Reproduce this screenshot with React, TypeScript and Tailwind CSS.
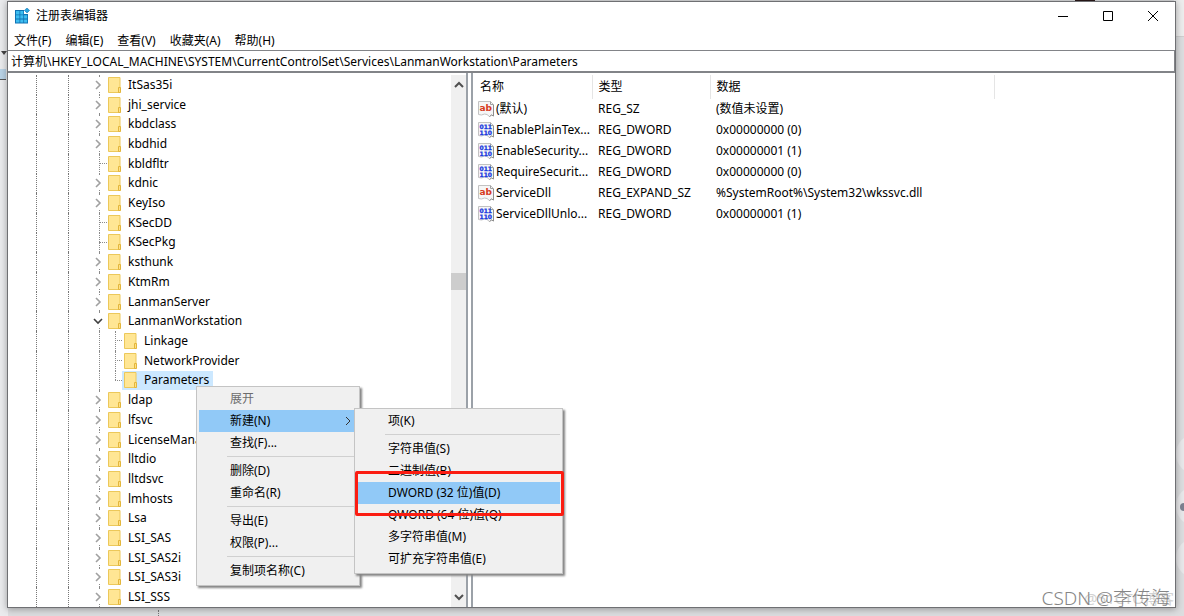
import { ReactNode } from "react";

interface TreeNode {
  name: string;
  state?: "closed" | "open";
  child?: boolean;
  last?: boolean;
  selected?: boolean;
}

interface RegValue {
  name: string;
  type: string;
  data: string;
  text?: boolean;
}

const nodes: TreeNode[] = [
  { name: "ItSas35i", state: "closed" },
  { name: "jhi_service", state: "closed" },
  { name: "kbdclass", state: "closed" },
  { name: "kbdhid", state: "closed" },
  { name: "kbldfltr" },
  { name: "kdnic", state: "closed" },
  { name: "KeyIso", state: "closed" },
  { name: "KSecDD" },
  { name: "KSecPkg" },
  { name: "ksthunk", state: "closed" },
  { name: "KtmRm", state: "closed" },
  { name: "LanmanServer", state: "closed" },
  { name: "LanmanWorkstation", state: "open" },
  { name: "Linkage", child: true },
  { name: "NetworkProvider", child: true },
  { name: "Parameters", child: true, last: true, selected: true },
  { name: "ldap", state: "closed" },
  { name: "lfsvc", state: "closed" },
  { name: "LicenseManager", state: "closed" },
  { name: "lltdio", state: "closed" },
  { name: "lltdsvc", state: "closed" },
  { name: "lmhosts", state: "closed" },
  { name: "Lsa", state: "closed" },
  { name: "LSI_SAS", state: "closed" },
  { name: "LSI_SAS2i", state: "closed" },
  { name: "LSI_SAS3i", state: "closed" },
  { name: "LSI_SSS", state: "closed" },
];

const values: RegValue[] = [
  { name: "(默认)", type: "REG_SZ", data: "(数值未设置)", text: true },
  { name: "EnablePlainTex...", type: "REG_DWORD", data: "0x00000000 (0)" },
  { name: "EnableSecurity...", type: "REG_DWORD", data: "0x00000001 (1)" },
  { name: "RequireSecurit...", type: "REG_DWORD", data: "0x00000000 (0)" },
  {
    name: "ServiceDll",
    type: "REG_EXPAND_SZ",
    data: "%SystemRoot%\\System32\\wkssvc.dll",
    text: true,
  },
  { name: "ServiceDllUnlo...", type: "REG_DWORD", data: "0x00000001 (1)" },
];

const menus = ["文件(F)", "编辑(E)", "查看(V)", "收藏夹(A)", "帮助(H)"];

const RegeditIcon = () => (
  <svg className="size-4 shrink-0" viewBox="0 0 16 16">
    <path d="M1 2h9v4h4v9.500H1z" fill="#1073b4" />
    <g fill="#3dbdf0">
      <path d="M2 3h3.500v3.400H2zM6.300 3h3v3.400h-3z" />
      <path d="M2 7.200h3.500v3.400H2zM6.300 7.200h3v3.400h-3zM10.100 7.200h3v3.400h-3z" />
      <path d="M2 11.400h3.500v3.200H2zM6.300 11.400h3v3.200h-3zM10.100 11.400h3v3.200h-3z" />
    </g>
    <path d="M13 0l2.600 2.400L13 5l-2.600-2.600z" fill="#2aa5df" stroke="#1479b8" strokeWidth=".6" />
  </svg>
);

const FolderIcon = () => (
  <svg className="h-4 w-3.5 shrink-0" viewBox="0 0 14 16">
    <path d="M.5.5h11.500v15H.5z" fill="#ffe694" stroke="#ecc85a" />
    <path d="M10.500 10.500h2v5h-2z" fill="#ffe086" stroke="#e3b63c" />
  </svg>
);

const ValueIcon = ({ text }: { text?: boolean }) => (
  <svg
    className="h-4 w-4 shrink-0 font-['DejaVu_Sans',sans-serif] font-bold"
    viewBox="0 0 16 16"
  >
    <path
      d="M.5.5h12l3 3v11.500l-2-1-2 1.500-2.500-2-2.500-.5-3 1-3-.5z"
      fill="#f6f6f6"
      stroke="#c2c2c2"
    />
    <path d="M12.500.5v3h3" fill="none" stroke="#a0a0a0" />
    <path d="M15.500 4v11l-2-1-2 1.500" fill="none" stroke="#8f8f8f" />
    {text ? (
      <text x="1.500" y="10" fontSize="9" fill="#d63a1e">
        ab
      </text>
    ) : (
      <g fontSize="6" fill="#1a3be0" stroke="#1a3be0" strokeWidth=".3">
        <text x="1.500" y="7">
          011
        </text>
        <text x="1.500" y="13">
          110
        </text>
      </g>
    )}
  </svg>
);

const Chevron = ({ className, d }: { className: string; d: string }) => (
  <svg className={className} viewBox="0 0 10 10" fill="none" stroke="currentColor">
    <path d={d} />
  </svg>
);

const TreeRow = ({ node }: { node: TreeNode }) => (
  <li className="flex min-h-0 flex-1 items-stretch">
    <span className="ml-7 w-8 shrink-0 border-l border-dotted border-[#777]" />
    <span className="w-[31px] shrink-0 border-l border-dotted border-[#777]" />
    <span className="relative flex w-4 shrink-0 items-center">
      <span className="absolute inset-y-0 left-0 border-l border-dotted border-[#8a8a8a]" />
      {!node.state && !node.child && (
        <span className="w-2 border-t border-dotted border-[#8a8a8a]" />
      )}
      {node.state && (
        <button
          aria-label={node.name}
          className="absolute -left-1.5 flex h-3.5 w-3 items-center bg-white"
        >
          {node.state === "open" ? (
            <Chevron className="size-2.5 stroke-[1.6] text-[#404040]" d="M1 3l4 4 4-4" />
          ) : (
            <Chevron className="size-2.5 stroke-[1.6] text-[#a0a0a0]" d="M3 1l4 4-4 4" />
          )}
        </button>
      )}
    </span>
    {node.child && (
      <span className="relative flex w-[7px] shrink-0 items-center">
        <span
          className={
            node.last
              ? "absolute top-0 left-0 h-1/2 border-l border-dotted border-[#8a8a8a]"
              : "absolute inset-y-0 left-0 border-l border-dotted border-[#8a8a8a]"
          }
        />
        <span className="w-full border-t border-dotted border-[#8a8a8a]" />
      </span>
    )}
    <span
      className={
        node.selected
          ? "flex items-center gap-1.5 bg-[#cce8ff] pr-1 pl-0.5"
          : node.child
            ? "flex items-center gap-1.5 pl-0.5"
            : "relative -ml-[7px] flex items-center gap-1.5"
      }
    >
      <FolderIcon />
      {node.name}
    </span>
  </li>
);

const ScrollBar = () => (
  <div className="mt-0.5 flex w-[15px] shrink-0 flex-col items-center bg-[#f0f0f0]">
    <button aria-label="向上滚动" className="flex h-5 items-center text-[#505050]">
      <Chevron className="size-2.5 stroke-2" d="M1 7l4-4 4 4" />
    </button>
    <div className="flex w-full flex-1 flex-col">
      <div className="flex-3" />
      <div className="h-[17px] bg-[#cdcdcd]" />
      <div className="flex-5" />
    </div>
    <button aria-label="向下滚动" className="flex h-5 items-center text-[#505050]">
      <Chevron className="size-2.5 stroke-2" d="M1 3l4 4 4-4" />
    </button>
  </div>
);

const Menu = ({ className, children }: { className: string; children: ReactNode }) => (
  <div
    role="menu"
    className={`absolute border border-[#c4c4c4] bg-[#f0f0f0] px-0.5 pt-px pb-[3px] shadow-[2px_2px_2px_#858585] ${className}`}
  >
    {children}
  </div>
);

interface MenuItemProps {
  label: string;
  active?: boolean;
  disabled?: boolean;
  arrow?: boolean;
}

const MenuItem = ({ label, active, disabled, arrow }: MenuItemProps) => (
  <button
    role="menuitem"
    disabled={disabled}
    className={`flex h-[22px] w-full items-center pr-1 pl-[31px] text-left whitespace-nowrap ${
      active ? "bg-[#91c9f7]" : ""
    } ${disabled ? "text-[#6d6d6d]" : ""}`}
  >
    <span className="flex-1">{label}</span>
    {arrow && <Chevron className="size-2.5 text-[#333]" d="M3 1l4 4-4 4" />}
  </button>
);

const Separator = () => (
  <hr className="my-0.5 ml-7 h-0.5 border-0 border-t border-[#d0d0d0]" />
);

const ContextMenu = () => (
  <Menu className="top-[384px] left-[188px] w-[164px]">
    <MenuItem label="展开" disabled />
    <div className="relative">
      <MenuItem label="新建(N)" active arrow />
      <Menu className="-top-0.5 left-[155px] w-[209px]">
        <MenuItem label="项(K)" />
        <Separator />
        <MenuItem label="字符串值(S)" />
        <MenuItem label="二进制值(B)" />
        <MenuItem label="DWORD (32 位)值(D)" active />
        <MenuItem label="QWORD (64 位)值(Q)" />
        <MenuItem label="多字符串值(M)" />
        <MenuItem label="可扩充字符串值(E)" />
        <div className="pointer-events-none absolute top-[62px] -right-0.5 left-0 h-[45px] rounded-xs border-3 border-[#fb1d12]" />
      </Menu>
    </div>
    <MenuItem label="查找(F)..." />
    <Separator />
    <MenuItem label="删除(D)" />
    <MenuItem label="重命名(R)" />
    <Separator />
    <MenuItem label="导出(E)" />
    <MenuItem label="权限(P)..." />
    <Separator />
    <MenuItem label="复制项名称(C)" />
  </Menu>
);

const TitleBar = () => (
  <header className="flex h-7 shrink-0 items-center pl-1.5">
    <RegeditIcon />
    <h1 className="ml-1.5 flex-1">注册表编辑器</h1>
    <button aria-label="最小化" className="flex w-[45px] justify-center">
      <svg className="size-3" viewBox="0 0 12 12" stroke="#000">
        <path d="M1 6.500h10" />
      </svg>
    </button>
    <button aria-label="最大化" className="flex w-[45px] justify-center">
      <svg className="size-3" viewBox="0 0 12 12" stroke="#000" fill="none">
        <path d="M1.500 1.500h9v9h-9z" />
      </svg>
    </button>
    <button aria-label="关闭" className="flex w-[45px] justify-center">
      <svg className="size-3" viewBox="0 0 12 12" stroke="#000">
        <path d="M1 1l10 10M11 1L1 11" />
      </svg>
    </button>
  </header>
);

const ValueTable = () => (
  <table className="w-[522px] table-fixed text-left">
    <thead>
      <tr className="h-6">
        <th className="w-[119px] border-r border-[#e5e5e5] pl-[7px] font-normal">名称</th>
        <th className="w-[118px] border-r border-[#e5e5e5] pl-1.5 font-normal">类型</th>
        <th className="border-r border-[#e5e5e5] pl-1.5 font-normal">数据</th>
      </tr>
    </thead>
    <tbody>
      {values.map((v) => (
        <tr key={v.name} className="h-[21px]">
          <td className="pb-0.5 pl-[5px]">
            <div className="flex items-center gap-0.5 whitespace-nowrap">
              <ValueIcon text={v.text} />
              {v.name}
            </div>
          </td>
          <td className="pb-0.5 pl-1.5">{v.type}</td>
          <td className="pb-0.5 pl-1.5">{v.data}</td>
        </tr>
      ))}
    </tbody>
  </table>
);

// whatever is visible of the window behind
const Backdrop = () => (
  <div className="absolute inset-0 overflow-hidden">
    <div className="absolute inset-y-0 left-0 w-2 bg-[#eaebed]" />
    <div className="absolute top-0 right-0 h-[37px] w-2.5 border-b border-[#cfcfcf] bg-[#ededed]" />
    <svg className="absolute top-[51px] left-0 h-1 w-[7px]" viewBox="0 0 7 4">
      <path d="M1 0h6L4 4z" fill="#444" />
    </svg>
    <div className="absolute top-[69px] left-0 h-[11px] w-1.5 border-b border-[#555] bg-[#b9d3e6]" />
    <div className="absolute top-[434px] -right-8 size-10 rounded-full bg-[#e8e8ea]" />
    <div className="absolute top-[486px] -right-8 size-10 rounded-full bg-[#e8e8ea]" />
    <div className="absolute top-[538px] -right-8 size-10 rounded-full bg-[#e8e8ea]" />
    <div className="absolute top-[503px] -right-1 size-2 rounded-full bg-[#7d8190]" />
    <div className="absolute bottom-0 left-[158px] h-1.5 border-l border-dotted border-[#777]" />
    <div className="absolute top-0 right-[89px] h-px w-5 bg-[#2b1a1a]" />
  </div>
);

export default function App() {
  return (
    <div className="relative flex h-screen min-h-[616px] flex-col overflow-hidden bg-[#dcdddf] pt-px pr-2 pb-2 pl-[7px] font-['Noto_Sans','Noto_Sans_CJK_SC',sans-serif] text-[12px] leading-4 text-black">
      <Backdrop />
      <main className="relative flex min-h-0 flex-1 flex-col border border-[#6f7073] bg-white shadow-[0_1px_7px_#00000059]">
        <TitleBar />
        <nav className="flex h-5 shrink-0 items-center gap-3.5 pt-px pl-1.5">
          {menus.map((m) => (
            <button key={m}>{m}</button>
          ))}
        </nav>
        <input
          aria-label="地址"
          className="h-[23px] w-full shrink-0 border-t border-r border-b-2 border-[#828488] pl-[3px] outline-none"
          defaultValue="计算机\HKEY_LOCAL_MACHINE\SYSTEM\CurrentControlSet\Services\LanmanWorkstation\Parameters"
        />
        <div className="flex min-h-0 flex-1">
          <section className="flex w-[460px] shrink-0 border-r-2 border-[#9ba1a8]">
            <ul className="flex flex-1 flex-col pt-0.5">
              {nodes.map((n) => (
                <TreeRow key={n.name} node={n} />
              ))}
            </ul>
            <ScrollBar />
          </section>
          <section className="ml-[3px] flex-1 border-l-2 border-[#9ba1a8] pt-0.5">
            <ValueTable />
          </section>
        </div>
        <ContextMenu />
      </main>
      <div className="pointer-events-none absolute right-2.5 bottom-1.5 text-[15px] leading-6 text-[#d2d2d2]">
        @51CTO博客
      </div>
      <div className="pointer-events-none absolute right-3.5 bottom-1.5 text-[19px] leading-6 font-light text-[#858585]">
        CSDN @李传海
      </div>
    </div>
  );
}
